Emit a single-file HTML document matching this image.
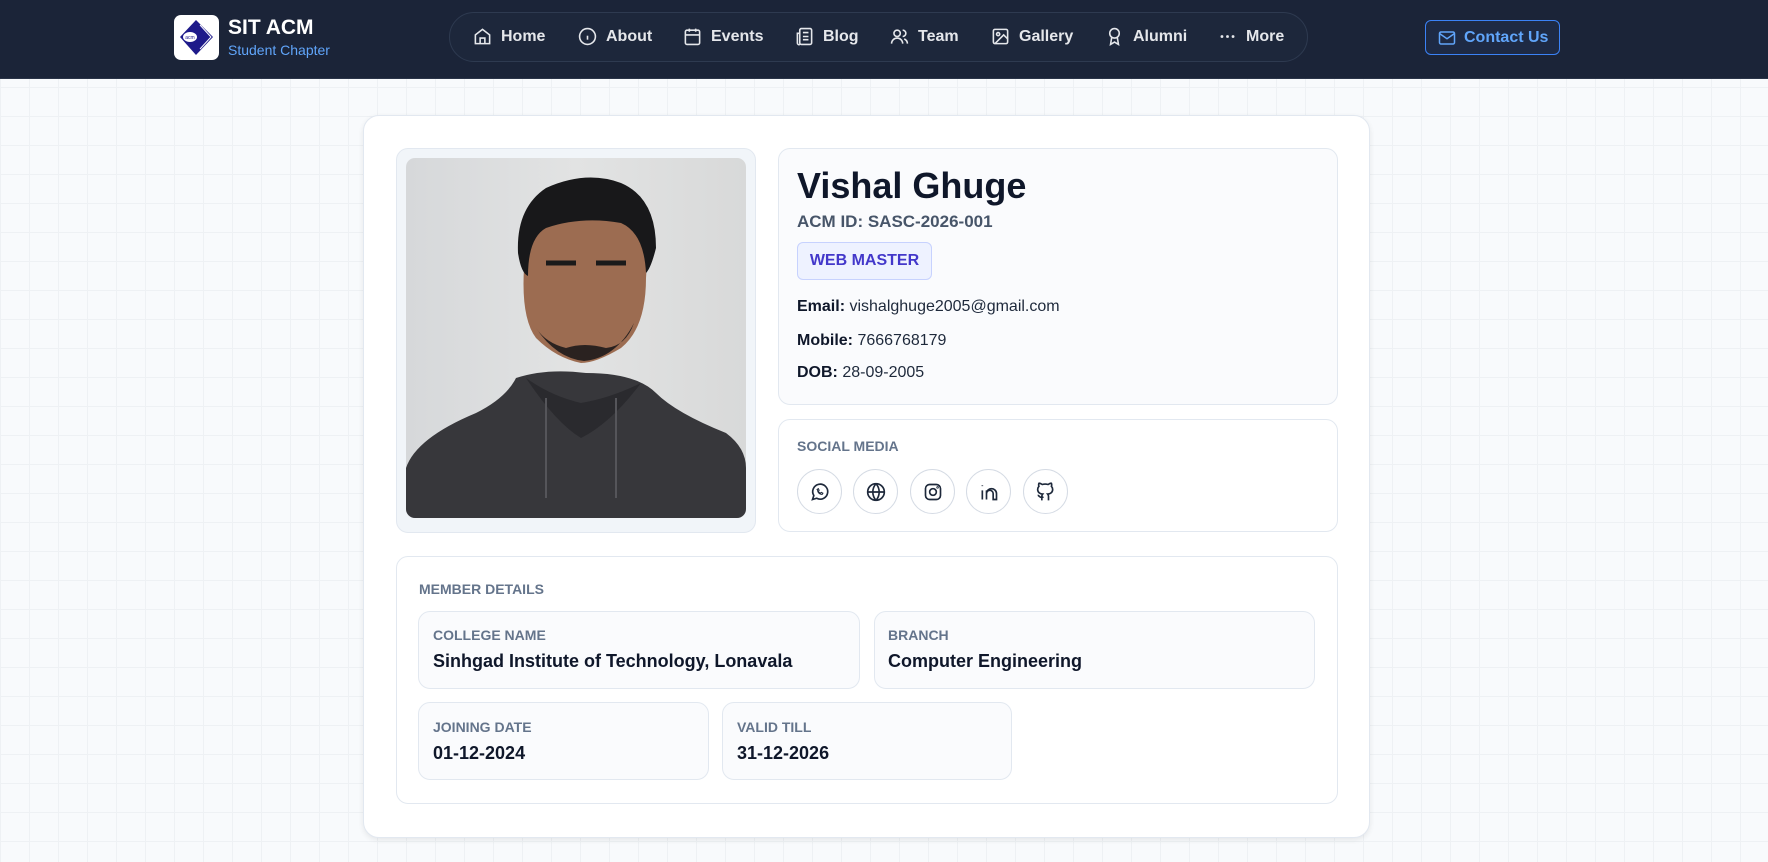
<!DOCTYPE html>
<html><head><meta charset="utf-8"><style>
*{box-sizing:border-box;margin:0;padding:0}
body{width:1768px;height:862px;overflow:hidden;font-family:"Liberation Sans",sans-serif;background-color:#f8fafc;background-image:linear-gradient(#eef1f4 1px,transparent 1px),linear-gradient(90deg,#eef1f4 1px,transparent 1px);background-size:29px 29px;position:relative}
.a{position:absolute}
nav{position:absolute;left:0;top:0;width:1768px;height:79px;background:#1b2438;border-bottom:1px solid #2a3448}
.pill{left:449px;top:12px;width:859px;height:50px;border:1px solid #2e3a50;border-radius:25px;background:#1d273b}
.ni{position:absolute;top:27px;color:#e5e7eb;font-size:16px;font-weight:bold;line-height:20px}
.ni svg{position:absolute;left:-28px;top:0}
.card{left:363px;top:115px;width:1007px;height:723px;background:#fff;border:1px solid #e2e8f0;border-radius:16px;box-shadow:0 2px 6px rgba(0,0,0,.08)}
.box{border:1px solid #e2e8f0;border-radius:12px;background:#fafbfd}
.lbl{font-size:14px;font-weight:bold;color:#64748b}
.val{font-size:18px;font-weight:bold;color:#0f172a}
.circ{width:45px;height:45px;border:1px solid #d5dbe4;border-radius:50%;background:#fff;display:flex;align-items:center;justify-content:center}
.t{font-size:16px;color:#1e293b}
.t b{color:#0f172a}
</style></head><body>
<nav>
<div class="a" style="left:174px;top:15px;width:45px;height:45px;background:#fff;border-radius:7px">
<svg width="45" height="45" viewBox="0 0 45 45"><path d="M22 5 L39 22 L22 40 L6 22Z" fill="#1e1a8a"/><path d="M26 10 L37 22 L26 34 M29 10 L40 22 L29 34" stroke="#fff" stroke-width="1" fill="none"/><ellipse cx="16" cy="22" rx="7" ry="5" fill="#fff"/><text x="16" y="24" font-size="5" text-anchor="middle" fill="#1e1a8a" font-family="Liberation Sans">acm</text></svg></div>
<div class="a" style="left:228px;top:16px;color:#fff;font-size:21px;font-weight:bold">SIT ACM</div>
<div class="a" style="left:228px;top:42px;color:#60a5fa;font-size:14px">Student Chapter</div>
<div class="a pill"></div>
<div class="ni" style="left:501px"><svg width="19" height="19" viewBox="0 0 24 24" fill="none" stroke="#e5e7eb" stroke-width="2"><path d="M3 10l9-7 9 7v11H3z M9 21v-7h6v7"/></svg>Home</div>
<div class="ni" style="left:606px"><svg width="19" height="19" viewBox="0 0 24 24" fill="none" stroke="#e5e7eb" stroke-width="2"><circle cx="12" cy="12" r="10"/><path d="M12 16v-5M12 8v0"/></svg>About</div>
<div class="ni" style="left:711px"><svg width="19" height="19" viewBox="0 0 24 24" fill="none" stroke="#e5e7eb" stroke-width="2"><rect x="3" y="4" width="18" height="18" rx="2"/><path d="M3 10h18M8 2v4M16 2v4"/></svg>Events</div>
<div class="ni" style="left:823px"><svg width="19" height="19" viewBox="0 0 24 24" fill="none" stroke="#e5e7eb" stroke-width="2"><rect x="6" y="2" width="15" height="20" rx="2"/><path d="M6 8H3v12a2 2 0 0 0 3 2M10 7h7M10 12h7M10 16h7"/></svg>Blog</div>
<div class="ni" style="left:918px"><svg width="19" height="19" viewBox="0 0 24 24" fill="none" stroke="#e5e7eb" stroke-width="2"><circle cx="9" cy="8" r="4"/><path d="M2 21a7 7 0 0 1 14 0M16 4a4 4 0 0 1 0 8M22 21a7 7 0 0 0-4-6"/></svg>Team</div>
<div class="ni" style="left:1019px"><svg width="19" height="19" viewBox="0 0 24 24" fill="none" stroke="#e5e7eb" stroke-width="2"><rect x="3" y="3" width="18" height="18" rx="2"/><circle cx="9" cy="9" r="2"/><path d="M21 15l-5-5L5 21"/></svg>Gallery</div>
<div class="ni" style="left:1133px"><svg width="19" height="19" viewBox="0 0 24 24" fill="none" stroke="#e5e7eb" stroke-width="2"><circle cx="12" cy="8" r="6"/><path d="M8.5 13L7 22l5-3 5 3-1.5-9"/></svg>Alumni</div>
<div class="ni" style="left:1246px"><svg width="19" height="19" viewBox="0 0 24 24" fill="#e5e7eb"><circle cx="5" cy="12" r="1.8"/><circle cx="12" cy="12" r="1.8"/><circle cx="19" cy="12" r="1.8"/></svg>More</div>
<div class="a" style="left:1425px;top:20px;width:135px;height:35px;border:1px solid #3b82f6;border-radius:6px;background:#1e2a44;color:#60a5fa;font-size:16px;font-weight:bold;line-height:33px;padding-left:38px">Contact Us
<svg class="a" style="left:12px;top:9px" width="18" height="16" viewBox="0 0 24 20" fill="none" stroke="#60a5fa" stroke-width="2"><rect x="2" y="2" width="20" height="16" rx="2"/><path d="M2 4l10 7 10-7"/></svg></div>
</nav>
<div class="a card"></div>
<div class="a" style="left:396px;top:148px;width:360px;height:385px;background:#f1f5f9;border:1px solid #e2e8f0;border-radius:12px"></div>
<svg class="a" style="left:406px;top:158px;border-radius:9px" width="340" height="360" viewBox="0 0 340 360">
<defs><linearGradient id="bg" x1="0" x2="1"><stop offset="0" stop-color="#d6d8da"/><stop offset=".5" stop-color="#e2e3e3"/><stop offset="1" stop-color="#d8d9d9"/></linearGradient></defs>
<rect width="340" height="360" fill="url(#bg)"/>
<path d="M0 360V310Q10 280 70 255Q100 240 110 220Q140 210 180 215Q230 215 250 235Q270 255 320 275Q340 290 340 310V360Z" fill="#37373b"/>
<path d="M120 220Q150 265 175 280Q205 265 235 225Q205 240 175 245Q145 238 120 220Z" fill="#2a2a2e"/>
<path d="M140 240V340M210 240V340" stroke="#55555a" stroke-width="2"/>
<path d="M118 110Q115 60 140 40Q180 20 220 40Q245 60 240 120Q240 170 215 190Q190 205 175 205Q150 200 130 180Q115 160 118 110Z" fill="#9c6c51"/>
<path d="M112 95Q110 50 140 30Q180 12 215 25Q250 40 250 90Q245 110 240 115Q238 75 215 65Q175 58 140 70Q122 80 122 118Q115 115 112 95Z" fill="#18181a"/>
<path d="M130 170Q150 200 178 203Q210 200 228 165Q220 188 200 190Q178 184 160 190Q140 185 130 170Z" fill="#2a2220"/>
<path d="M140 105h30M190 105h30" stroke="#1a1a1a" stroke-width="5"/>
</svg>
<div class="a box" style="left:778px;top:148px;width:560px;height:257px"></div>
<div class="a" style="left:797px;top:165px;font-size:36px;font-weight:bold;color:#0f172a">Vishal Ghuge</div>
<div class="a" style="left:797px;top:212px;font-size:17px;font-weight:bold;color:#475569">ACM ID: SASC-2026-001</div>
<div class="a" style="left:797px;top:242px;width:135px;height:38px;background:#eef2ff;border:1px solid #c7d2fe;border-radius:6px;color:#4338ca;font-size:16px;font-weight:bold;line-height:36px;text-align:center">WEB MASTER</div>
<div class="a t" style="left:797px;top:298px"><b>Email:</b> vishalghuge2005@gmail.com</div>
<div class="a t" style="left:797px;top:332px"><b>Mobile:</b> 7666768179</div>
<div class="a t" style="left:797px;top:364px"><b>DOB:</b> 28-09-2005</div>
<div class="a box" style="left:778px;top:419px;width:560px;height:113px;background:#fff"></div>
<div class="a lbl" style="left:797px;top:438px">SOCIAL MEDIA</div>
<div class="a circ" style="left:797px;top:469px"><svg width="20" height="20" viewBox="0 0 24 24" fill="none" stroke="#1e293b" stroke-width="2"><path d="M3 21l1.6-4.7A9 9 0 1 1 8 19.5z"/><path d="M9 9.5c0 3 2.5 5.5 5.5 5.5l1-1.5-2-1-1 1c-1-.5-2-1.5-2.5-2.5l1-1-1-2-1.5 1z" stroke-width="1.2"/></svg></div>
<div class="a circ" style="left:853px;top:469px"><svg width="20" height="20" viewBox="0 0 24 24" fill="none" stroke="#1e293b" stroke-width="2"><circle cx="12" cy="12" r="10"/><path d="M2 12h20M12 2a15 15 0 0 1 0 20M12 2a15 15 0 0 0 0 20"/></svg></div>
<div class="a circ" style="left:910px;top:469px"><svg width="20" height="20" viewBox="0 0 24 24" fill="none" stroke="#1e293b" stroke-width="2"><rect x="3" y="3" width="18" height="18" rx="5"/><circle cx="12" cy="12" r="4"/><circle cx="17.5" cy="6.5" r=".5"/></svg></div>
<div class="a circ" style="left:966px;top:469px"><svg width="20" height="20" viewBox="0 0 24 24" fill="none" stroke="#1e293b" stroke-width="2"><path d="M4 10v11M4 4v1M9 21V10M9 14a4 4 0 0 1 8 0v7h4v-7a6 6 0 0 0-12 0"/></svg></div>
<div class="a circ" style="left:1023px;top:469px"><svg width="20" height="20" viewBox="0 0 24 24" fill="none" stroke="#1e293b" stroke-width="2"><path d="M15 22v-4a4.8 4.8 0 0 0-1-3.5c3 0 6-2 6-5.5a5.5 5.5 0 0 0-1.5-3.8 5 5 0 0 0-.1-3.7s-1.2-.4-3.9 1.5a13 13 0 0 0-7 0C4.8 1.1 3.6 1.5 3.6 1.5a5 5 0 0 0-.1 3.7A5.5 5.5 0 0 0 2 9c0 3.5 3 5.5 6 5.5a4.8 4.8 0 0 0-1 3.5v4M9 18c-4.5 2-5-2-7-2"/></svg></div>
<div class="a box" style="left:396px;top:556px;width:942px;height:248px;background:#fff"></div>
<div class="a lbl" style="left:419px;top:581px">MEMBER DETAILS</div>
<div class="a box" style="left:418px;top:611px;width:442px;height:78px"></div>
<div class="a box" style="left:874px;top:611px;width:441px;height:78px"></div>
<div class="a box" style="left:418px;top:702px;width:291px;height:78px"></div>
<div class="a box" style="left:722px;top:702px;width:290px;height:78px"></div>
<div class="a lbl" style="left:433px;top:627px">COLLEGE NAME</div>
<div class="a val" style="left:433px;top:651px">Sinhgad Institute of Technology, Lonavala</div>
<div class="a lbl" style="left:888px;top:627px">BRANCH</div>
<div class="a val" style="left:888px;top:651px">Computer Engineering</div>
<div class="a lbl" style="left:433px;top:719px">JOINING DATE</div>
<div class="a val" style="left:433px;top:743px">01-12-2024</div>
<div class="a lbl" style="left:737px;top:719px">VALID TILL</div>
<div class="a val" style="left:737px;top:743px">31-12-2026</div>
</body></html>
